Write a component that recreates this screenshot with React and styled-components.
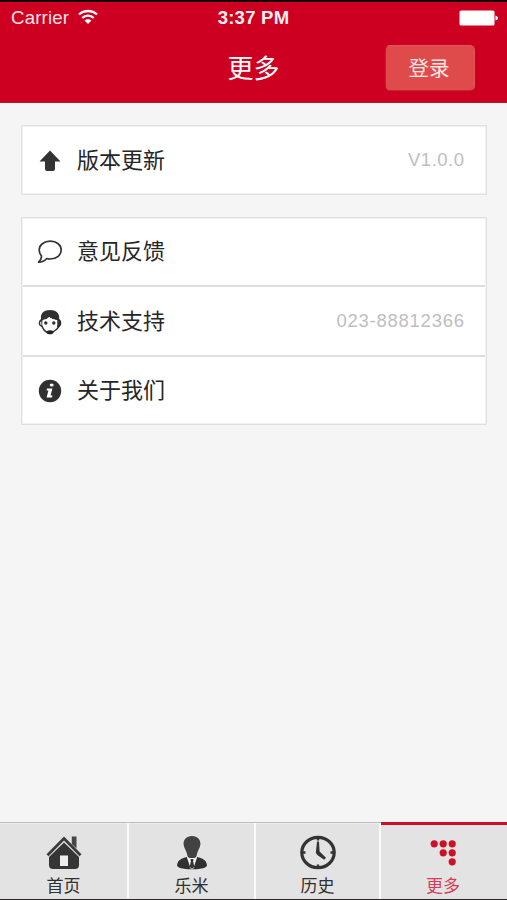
import React from "react";
import styled, { createGlobalStyle } from "styled-components";

const GlobalStyle = createGlobalStyle`
  * { box-sizing: border-box; }
  body {
    margin: 0;
    background: #f5f5f5;
    font-family: "Liberation Sans", "Noto Sans CJK SC", sans-serif;
  }
  svg { display: block; flex: none; }
`;

const Screen = styled.div`
  display: flex;
  flex-direction: column;
  width: 507px;
  height: 900px;
  overflow: hidden;
  background: #f5f5f5;
  border-top: 2px solid #160206;
  border-bottom: 1px solid #2a2627;
`;

const Header = styled.header`
  flex: none;
  height: 101px;
  background: #ce0021;
  border-bottom: 1px solid #b5142c;
  color: #fff;
`;

const StatusBar = styled.div`
  display: grid;
  grid-template-columns: 1fr auto 1fr;
  align-items: center;
  height: 32px;
  padding: 0 9px 0 11px;
`;

const Carrier = styled.div`
  display: flex;
  align-items: center;
  gap: 9px;
  font-size: 18.6px;
  letter-spacing: 0.2px;
  color: #ffe3e7;

  svg { margin-top: -2px; }
`;

const Clock = styled.div`
  margin-left: -2px;
  font-size: 18.5px;
  font-weight: bold;
  letter-spacing: 0.25px;
  color: #fff0f2;
`;

const BatteryWrap = styled.div`
  display: flex;
  justify-content: flex-end;
`;

const NavBar = styled.div`
  display: grid;
  grid-template-columns: 1fr auto 1fr;
  align-items: center;
  height: 68px;
  padding: 0 32px 0 0;
`;

const Title = styled.h1`
  grid-column: 2;
  margin: 2px 0 0 32px;
  font-size: 26px;
  line-height: 36px;
  font-weight: 400;
`;

const LoginButton = styled.button`
  justify-self: end;
  width: 90px;
  height: 46px;
  padding: 0 2px 2px 0;
  border: 1px solid #e4555a;
  border-left-color: #ad2a2d;
  border-bottom-color: #b9292f;
  border-radius: 5px;
  background: #df4b4b;
  color: #ffe5e3;
  font: 20.5px "Noto Sans CJK SC", sans-serif;
`;

const Content = styled.main`
  flex: 1;
  display: flex;
  flex-direction: column;
  gap: 22px;
  padding: 22px 20px 0 21px;
`;

const Group = styled.section`
  border: 1px solid #e0e0e0;
  outline: 1px solid #f1f1f1;
  outline-offset: -2px;
  background: #fff;
`;

const Row = styled.div`
  display: flex;
  align-items: center;
  height: ${(p) => p.$height}px;
  padding: 0 22px 0 15px;
  & + & {
    border-top: 2px solid #dedede;
  }
`;

const IconSlot = styled.span`
  display: flex;
  justify-content: center;
  width: 26px;
  margin-right: 14px;
  padding-top: 1px;
`;

const Label = styled.span`
  flex: 1;
  padding-top: 1px;
  font-size: 22px;
  line-height: 32px;
  color: #262626;
`;

const Value = styled.span`
  font-size: 18.5px;
  letter-spacing: ${(p) => p.$spacing}px;
  margin-right: ${(p) => -p.$spacing}px;
  padding-bottom: 1px;
  color: #bebebe;
`;

const TabBar = styled.nav`
  flex: none;
  display: grid;
  grid-template-columns: 129px 127px 125px 126px;
  height: 77px;
  background: #e3e3e3;
`;

const Tab = styled.a`
  display: flex;
  flex-direction: column;
  align-items: center;
  padding-top: ${(p) => (p.$active ? 10 : 12)}px;
  border-top: ${(p) => (p.$active ? "3px solid #cd1027" : "1px solid #bcbcbc")};
  padding-right: 2px;
  color: ${(p) => (p.$active ? "#cd1027" : "#303030")};
  box-shadow: ${(p) =>
    p.$active ? "none" : "inset -2px 0 #fafafa, inset 0 1px #ededed"};
`;

const TabLabel = styled.span`
  margin-top: 4px;
  font-size: 17px;
  line-height: 24px;
  color: ${(p) => (p.$active ? "#d63c58" : "#303030")};
`;

const WifiIcon = () => (
  <svg width="20" height="16" viewBox="0 0 20 16" fill="none" stroke="#fff" strokeWidth="2.3">
    <path d="M1 5.5C6 .8 14 .8 19 5.5M4.2 9C7.5 5.7 12.5 5.7 15.8 9" />
    <path d="M6.5 11.5Q10 8.8 13.5 11.5L10 15Z" fill="#fff" stroke="none" />
  </svg>
);

const BatteryIcon = () => (
  <svg width="39" height="16" viewBox="0 0 39 16" fill="#fff">
    <rect x=".5" y=".5" width="35" height="15" rx="1.6" />
    <path d="M36.5 5.5Q39 6 39 8T36.5 10.5Z" />
  </svg>
);

const ArrowUpIcon = () => (
  <svg width="22" height="22" viewBox="0 0 22 22" fill="#333">
    <path d="M11 .5 21.5 11.5H16V19Q16 21 14 21H8Q6 21 6 19V11.5H.5Z" />
  </svg>
);

const CommentIcon = () => (
  <svg width="26" height="24" viewBox="0 0 26 24" fill="none" stroke="#333" strokeWidth="1.7" strokeLinejoin="round">
    <path d="M13.3 1.2C19.8 1.2 24.2 5 24.2 10S19.8 19 13.3 19Q11.3 19 9.8 18.5Q6.5 22.2 1.6 22.2Q4.6 19.4 4.5 16Q2.2 13.4 2.2 10C2.2 5 6.8 1.2 13.3 1.2Z" />
  </svg>
);

const SupportIcon = () => (
  <svg width="24" height="26" viewBox="0 0 24 26">
    <path d="M3 10C2.2 4 6.2 1 12 1S21.8 4 21.2 10Q23.5 11 23.3 14.5Q22.8 18.2 19 18.8L19 11.5Q14 10.5 11 8Q9 10.8 4.8 11.5L4 18Q.5 17 .7 13.8Q1 11 3 10Z" fill="#303030" />
    <path d="M4.6 11Q9 10.3 11.5 8.6Q14 10.4 19.3 11.2Q20.6 21.5 12 23.5Q3.6 21.5 4.6 11Z" fill="#fff" />
    <path d="M3.8 16.5Q5.5 22 10 23.8M21.6 16.5Q19 21.3 14 23.2" fill="none" stroke="#303030" strokeWidth="1.5" />
    <path d="M3.3 12Q1.8 13 2.2 14.8Q2.4 16 3.4 16.4Z" fill="#fff" />
    <circle cx="7.8" cy="14" r="1.7" fill="#303030" />
    <circle cx="15.8" cy="14" r="1.7" fill="#303030" />
    <ellipse cx="12" cy="23.3" rx="3.4" ry="2" fill="#222" />
  </svg>
);

const InfoIcon = () => (
  <svg width="24" height="24" viewBox="0 0 24 24">
    <circle cx="12" cy="12" r="11.2" fill="#303030" />
    <ellipse cx="13.7" cy="6" rx="2" ry="1.6" fill="#fff" />
    <path d="M9 9.6H14.4L12.6 16.4H14.5L14 18.4H8.6L10.4 11.6H8.6Z" fill="#fff" />
  </svg>
);

const HomeIcon = () => (
  <svg width="36" height="36" viewBox="0 0 36 36">
    <path d="M25.8 1.5H30.5V13.5L25.8 9Z" fill="#464646" />
    <path d="M1.5 20.2 18 3.5 34.5 20.2" fill="none" stroke="#3b3b3b" strokeWidth="2.8" />
    <path d="M18 7.6 33 22V30Q33 34 29 34H7Q3 34 3 30V22Z" fill="#353535" />
    <path d="M14 20.5H22V31H14Z" fill="#ededed" />
  </svg>
);

const PersonIcon = () => (
  <svg width="32" height="36" viewBox="0 0 32 36">
    <path d="M10.3 22Q1 24.5 1 30Q1 34.2 16 34.2T31 30Q31 24.5 21.7 22Z" fill="#303030" />
    <path d="M10.6 21.6 14.8 34H17.2L21.4 21.6Z" fill="#f2f2f2" />
    <path d="M16 1C21.6 1 24.8 4.8 24.4 9.6C24.1 13 21.6 15.6 21 19Q20.8 22 18.6 23H13.4Q11.2 22 11 19C10.4 15.6 7.9 13 7.6 9.6C7.2 4.8 10.4 1 16 1Z" fill="#424242" />
    <path d="M14.5 24H17.5L17.1 26 18.2 31.5 16 34 13.8 31.5 14.9 26Z" fill="#333" />
  </svg>
);

const HistoryIcon = () => (
  <svg width="36" height="36" viewBox="0 0 36 36" fill="none" stroke="#333">
    <ellipse cx="18" cy="17.5" rx="16.2" ry="15.2" strokeWidth="3.2" />
    <path d="M18 3V5.5M18 29.5V32M3 17.5H5.5M30.5 17.5H33" strokeWidth="2.3" />
    <path d="M17 6.5H19L19.6 16.4 26 22.7 24.2 24.7 17.6 20.3 15.8 18Z" fill="#333" stroke="none" />
  </svg>
);

const DOTS = [[4.2, 8.8], [13.2, 8.8], [22.2, 8.8], [13.2, 17.8], [22.2, 17.8], [22.2, 26.8]];

const MoreIcon = () => (
  <svg width="26" height="36" viewBox="0 0 26 36" fill="#cd1027">
    {DOTS.map(([x, y]) => (
      <circle key={`${x}-${y}`} cx={x} cy={y} r="3.6" />
    ))}
  </svg>
);

const TABS = [
  { label: "首页", Icon: HomeIcon },
  { label: "乐米", Icon: PersonIcon },
  { label: "历史", Icon: HistoryIcon },
  { label: "更多", Icon: MoreIcon, active: true },
];

function SettingRow({ Icon, label, value, spacing, height }) {
  return (
    <Row $height={height}>
      <IconSlot><Icon /></IconSlot>
      <Label>{label}</Label>
      {value && <Value $spacing={spacing}>{value}</Value>}
    </Row>
  );
}

export default function App() {
  return (
    <>
      <GlobalStyle />
      <Screen>
        <Header>
          <StatusBar>
            <Carrier>Carrier <WifiIcon /></Carrier>
            <Clock>3:37 PM</Clock>
            <BatteryWrap><BatteryIcon /></BatteryWrap>
          </StatusBar>
          <NavBar>
            <Title>更多</Title>
            <LoginButton>登录</LoginButton>
          </NavBar>
        </Header>
        <Content>
          <Group>
            <SettingRow Icon={ArrowUpIcon} label="版本更新" value="V1.0.0" spacing={0.5} height={68} />
          </Group>
          <Group>
            <SettingRow Icon={CommentIcon} label="意见反馈" height={67} />
            <SettingRow Icon={SupportIcon} label="技术支持" value="023-88812366" spacing={0.75} height={70} />
            <SettingRow Icon={InfoIcon} label="关于我们" height={69} />
          </Group>
        </Content>
        <TabBar>
          {TABS.map(({ label, Icon, active }) => (
            <Tab key={label} $active={active}>
              <Icon />
              <TabLabel $active={active}>{label}</TabLabel>
            </Tab>
          ))}
        </TabBar>
      </Screen>
    </>
  );
}
